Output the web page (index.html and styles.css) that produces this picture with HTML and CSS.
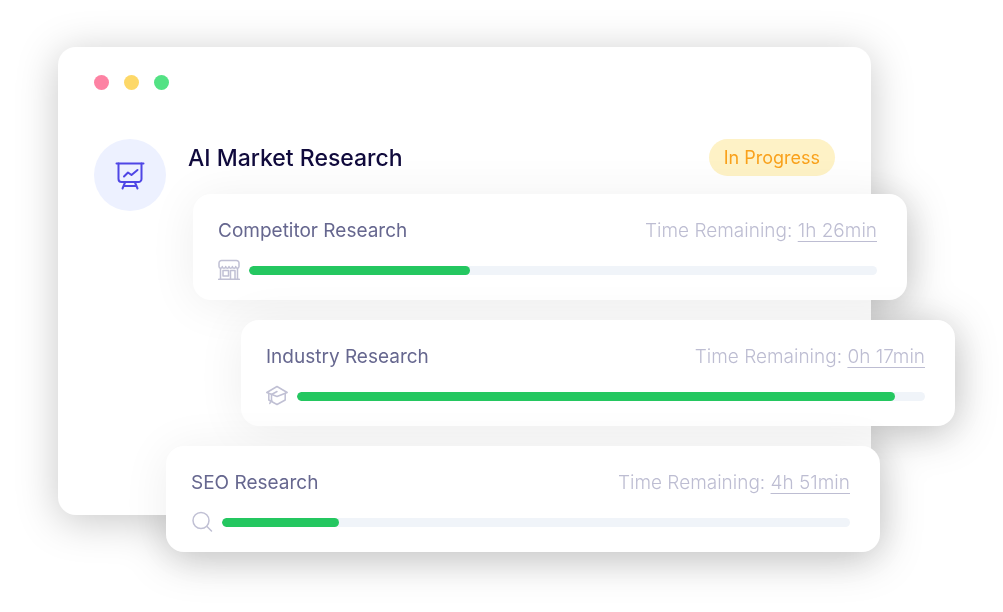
FILE: index.html
```html
<!DOCTYPE html>
<html lang="en">
<head>
  <meta charset="UTF-8">
  <meta name="viewport" content="width=device-width, initial-scale=1.0">
  <title>AI Market Research</title>
  <link rel="stylesheet" href="styles.css">
</head>
<body>
  <main class="stage">
    <section class="window">
      <div class="window-dots">
        <span class="dot dot-red"></span>
        <span class="dot dot-yellow"></span>
        <span class="dot dot-green"></span>
      </div>

      <div class="project">
        <div class="project-icon">
          <svg width="30" height="30" viewBox="0 0 30 30" fill="none" stroke="#4f46e5" stroke-width="2" stroke-linecap="round" stroke-linejoin="round">
            <path d="M1.500 3.500h27"/>
            <path d="M3.500 3.500v15.500a3 3 0 0 0 3 3h17a3 3 0 0 0 3-3V3.500"/>
            <path d="M9 16.500l4-4 3.500 2.500 6-5"/>
            <path d="M10 22.500l-2.500 6M20 22.500l2.500 6M9.500 26h11.500"/>
          </svg>
        </div>

        <div class="project-body">
          <header class="project-header">
            <h1>AI Market Research</h1>
            <span class="status">In Progress</span>
          </header>

          <div class="tasks">
            <article class="card card-competitor">
              <div class="card-row">
                <h2 id="competitor">Competitor Research</h2>
                <p class="remaining">Time Remaining: <span class="time">1h 26min</span></p>
              </div>
              <div class="card-progress">
                <svg class="card-icon" viewBox="0 0 22 22">
                  <path d="M3.500 1.500h15a2.500 2.500 0 0 1 2.500 2.500v3.500a1.600 1.600 0 0 1-3.300 0 1.600 1.600 0 0 1-3.300 0 1.600 1.600 0 0 1-3.400 0 1.600 1.600 0 0 1-3.300 0 1.600 1.600 0 0 1-3.400 0 1.600 1.600 0 0 1-3.300 0V4a2.500 2.500 0 0 1 2.500-2.500z"/>
                  <path d="M2.500 9.500v10.500M19.500 9.500v10.500M.7 20.300h20.600"/>
                  <path d="M5 11.500h5.500v5.500H5zM12.500 20v-8.500h4.500V20"/>
                </svg>
                <progress value="35.200" max="100" aria-labelledby="competitor"></progress>
              </div>
            </article>

            <article class="card card-industry">
              <div class="card-row">
                <h2 id="industry">Industry Research</h2>
                <p class="remaining">Time Remaining: <span class="time">0h 17min</span></p>
              </div>
              <div class="card-progress">
                <svg class="card-icon" viewBox="0 0 22 22">
                  <path d="M11 1.500L.8 7.500 11 11.500l10.200-4z"/>
                  <path d="M2.800 8.500v6.500l8.200 4.500 8.200-4.500V8.500"/>
                  <path d="M11 6.500L5.500 9.500v5l-1.700 4M5.500 14.500l.5 2"/>
                </svg>
                <progress value="95.200" max="100" aria-labelledby="industry"></progress>
              </div>
            </article>

            <article class="card card-seo">
              <div class="card-row">
                <h2 id="seo">SEO Research</h2>
                <p class="remaining">Time Remaining: <span class="time">4h 51min</span></p>
              </div>
              <div class="card-progress">
                <svg class="card-icon" viewBox="0 0 22 22">
                  <circle cx="10" cy="9.500" r="8"/>
                  <path d="M16 15.500l4.500 4.500"/>
                </svg>
                <progress value="18.600" max="100" aria-labelledby="seo"></progress>
              </div>
            </article>
          </div>
        </div>
      </div>
    </section>
  </main>
</body>
</html>
```
FILE: styles.css
```css
* {
  margin: 0;
  padding: 0;
  box-sizing: border-box;
}

body {
  font-family: Inter, "Liberation Sans", sans-serif;
  background: #fff;
}

.stage {
  padding: 47px 132px 96px 58px;
}

.window {
  background: #fff;
  border-radius: 18px;
  padding: 28px 36px;
  filter: drop-shadow(0 6px 20px rgba(0, 0, 0, 0.22));
}

.window-dots {
  display: flex;
  gap: 15px;
  margin-bottom: 49px;
}

.dot {
  width: 15px;
  height: 15px;
  border-radius: 50%;
}

.dot-red {
  background: #fd82a3;
}

.dot-yellow {
  background: #fdd868;
}

.dot-green {
  background: #53e284;
}

.project {
  display: flex;
  align-items: flex-start;
  gap: 22px;
}

.project-icon {
  display: flex;
  align-items: center;
  justify-content: center;
  flex: none;
  width: 72px;
  height: 72px;
  border-radius: 50%;
  background: #edf1ff;
}

.project-body {
  flex: 1;
  min-width: 0;
}

.project-header {
  display: flex;
  align-items: flex-start;
  justify-content: space-between;
  margin-bottom: 16px;
}

h1 {
  font-size: 23px;
  font-weight: 500;
  line-height: 39px;
  color: #100a3c;
}

.status {
  padding: 0 15px;
  border-radius: 20px;
  background: #fef2c6;
  color: #f9a11b;
  font-size: 18px;
  line-height: 37px;
}

/* the cards stick out of the window on the right and at the bottom */
.tasks {
  display: flex;
  flex-direction: column;
  gap: 20px;
  margin-bottom: -65px;
}

.card {
  padding: 25px 30px 19px 25px;
  border-radius: 18px;
  background: #fff;
  box-shadow: 0 4px 48px rgba(0, 0, 0, 0.07);
}

.card-competitor {
  margin-left: 5px;
  margin-right: -72px;
}

.card-industry {
  margin-left: 53px;
  margin-right: -120px;
}

.card-seo {
  margin-left: -22px;
  margin-right: -45px;
}

.card-row {
  display: flex;
  justify-content: space-between;
  margin-bottom: 16px;
  font-size: 19px;
  line-height: 24px;
}

h2 {
  font-size: 19px;
  font-weight: 400;
  color: #66678f;
}

.remaining {
  font-weight: 300;
  color: #bdbdd2;
}

.time {
  text-decoration: underline;
  text-decoration-thickness: 1px;
  text-underline-offset: 4px;
}

.card-progress {
  display: flex;
  align-items: center;
  gap: 9px;
}

.card-icon {
  flex: none;
  width: 22px;
  height: 22px;
  fill: none;
  stroke: #c0c0d4;
  stroke-width: 1.5;
  stroke-linecap: round;
  stroke-linejoin: round;
}

progress {
  appearance: none;
  -webkit-appearance: none;
  flex: 1;
  min-width: 0;
  height: 9px;
  border: none;
  border-radius: 5px;
  overflow: hidden;
  background: #f0f4f9;
}

progress::-webkit-progress-bar {
  background: #f0f4f9;
}

progress::-webkit-progress-value {
  border-radius: 5px;
  background: #24c760;
}
```
